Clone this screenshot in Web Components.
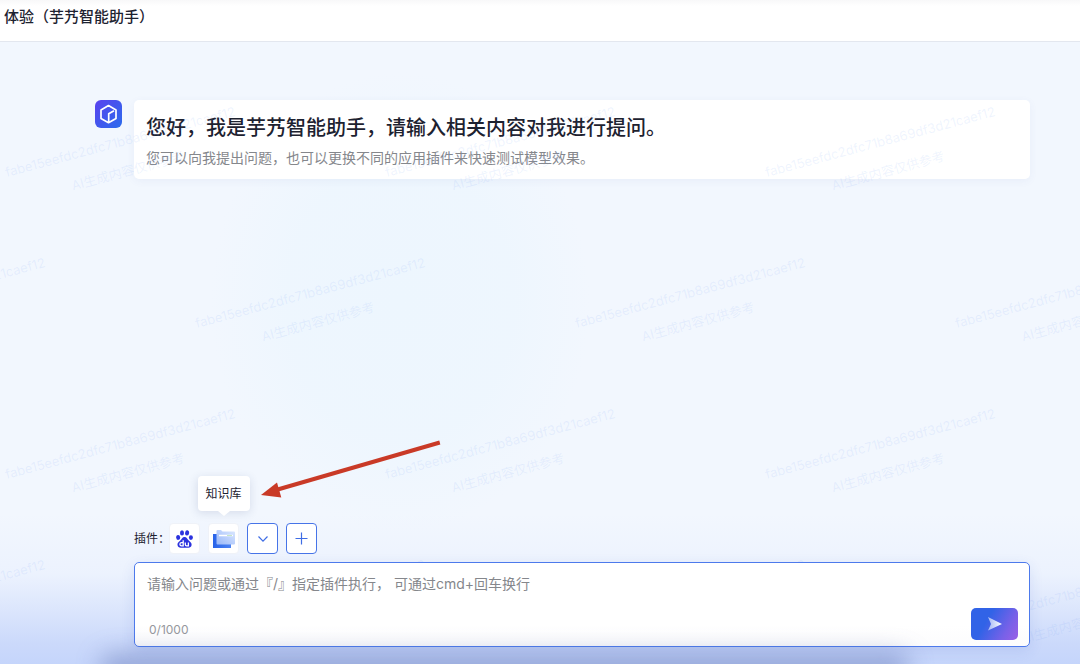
<!DOCTYPE html>
<html lang="zh-CN">
<head>
<meta charset="utf-8">
<title>体验（芋艿智能助手）</title>
<style>
html { height: 100%; }
body { margin: 0; min-height: 100%; display: flex; flex-direction: column; font-family: Inter, "Noto Sans CJK SC", sans-serif; color: #1d2230; }
</style>
</head>
<body>
<page-header>体验（芋艿智能助手）</page-header>
<chat-stage>
  <assistant-message>
    <span slot="title">您好，我是芋艿智能助手，请输入相关内容对我进行提问。</span>
    <span slot="hint">您可以向我提出问题，也可以更换不同的应用插件来快速测试模型效果。</span>
  </assistant-message>
  <plugin-bar slot="footer"></plugin-bar>
  <chat-composer slot="footer"></chat-composer>
</chat-stage>

<script>
class ShadowElement extends HTMLElement {
  constructor() {
    super();
    this.attachShadow({ mode: "open" }).innerHTML = this.render();
  }
}

customElements.define("page-header", class extends ShadowElement {
  render() {
    return `<style>
      :host { display: block; background: linear-gradient(#f8f8f9, #fff 6px); border-bottom: 1px solid #e3e7ef; }
      h1 { margin: 0; padding: 5px 4px 12px; font-size: 15px; line-height: 24px; font-weight: 500; }
    </style><h1><slot></slot></h1>`;
  }
});

customElements.define("chat-stage", class extends ShadowElement {
  render() {
    return `<style>
      :host { position: relative; flex: 1; display: flex; flex-direction: column; justify-content: space-between; overflow: hidden; box-sizing: border-box; padding: 58px 50px 17px 95px;
        background:
          linear-gradient(to top, #c5d5fb 0, #cbd9fb 20px, rgba(216,227,252,.85) 55px, rgba(232,239,254,.6) 90px, rgba(242,247,254,0) 150px),
          radial-gradient(ellipse 190px 230px at 400px 260px, #edf6fe 0, rgba(237,246,254,.8) 60%, rgba(242,247,254,0) 100%),
          #f2f7fe; }
      footer { position: relative; z-index: 2; margin-left: 39px; display: flex; flex-direction: column; gap: 8px; }
      .glow { position: absolute; z-index: 3; left: 100px; right: 170px; bottom: -18px; height: 28px; border-radius: 14px; background: rgba(70,90,160,.4); filter: blur(12px); pointer-events: none; }
    </style>
    <slot></slot>
    <water-mark></water-mark>
    <footer><slot name="footer"></slot></footer>
    <div class="glow"></div>`;
  }
});

customElements.define("water-mark", class extends ShadowElement {
  render() {
    let tiles = "";
    for (let row = 0; row * 151 < innerHeight; row++) {
      const shift = row % 2 ? -66 : 124;
      for (let x = shift; x < innerWidth + 120; x += 380) {
        tiles += `<g transform="translate(${x} ${114 + row * 151}) rotate(-15)"><text y="-10">fabe15eefdc2dfc71b8a69df3d21caef12</text><text y="20">AI生成内容仅供参考</text></g>`;
      }
    }
    return `<style>
      :host { position: absolute; inset: 0; z-index: 1; pointer-events: none; }
      svg { display: block; width: 100%; height: 100%; }
      text { font-size: 13px; font-weight: 400; text-anchor: middle; fill: rgba(120,160,245,.12); }
    </style><svg aria-hidden="true">${tiles}</svg>`;
  }
});

customElements.define("assistant-message", class extends ShadowElement {
  render() {
    return `<style>
      :host { display: flex; align-items: flex-start; gap: 12px; }
      svg { flex: none; width: 27px; height: 28px; }
      article { flex: 1; padding: 12px 12px 11px; border-radius: 5px; background: #fff; box-shadow: 0 2px 8px rgba(60,90,170,.06); }
      h2, p { margin: 0; }
      h2 { font-size: 20px; line-height: 32px; font-weight: 500; }
      p { margin-top: 4px; font-size: 14px; line-height: 20px; color: #85878c; }
    </style>
    <svg viewBox="0 0 27 28" aria-hidden="true">
      <defs><linearGradient id="a" x1="0" y1="0" x2="1" y2="1"><stop stop-color="#5a42ef"/><stop offset="1" stop-color="#2b6cec"/></linearGradient></defs>
      <rect width="27" height="28" rx="6" fill="url(#a)"/>
      <path d="M13.5 5.600 21 9.900v8.500l-7.500 4.300L6 18.400V9.900zM19 10.700l-5.300 3.100v8" fill="none" stroke="#fff" stroke-width="1.700" stroke-linejoin="round"/>
    </svg>
    <article><h2><slot name="title"></slot></h2><p><slot name="hint"></slot></p></article>`;
  }
});

customElements.define("plugin-button", class extends ShadowElement {
  render() {
    return `<style>
      :host { position: relative; display: block; }
      button { display: flex; align-items: center; justify-content: center; width: 31px; height: 31px; padding: 0; border: 1px solid #eff2f8; border-radius: 4px; background: #fff; }
      :host([outlined]) button { border-color: #4674e8; }
    </style><button type="button" aria-label="${this.getAttribute("label")}"><slot></slot></button><slot name="tip"></slot>`;
  }
});

customElements.define("tool-tip", class extends ShadowElement {
  render() {
    return `<style>
      :host { position: absolute; left: 50%; bottom: 43px; transform: translateX(-50%); padding: 8px; border-radius: 4px; background: #fff; box-shadow: 0 2px 10px rgba(40,60,110,.14); font-size: 12px; line-height: 19px; white-space: nowrap; }
      :host::after { content: ""; position: absolute; left: 50%; top: 100%; margin-left: -6px; border: 6px solid transparent; border-top: 5px solid #fff; border-bottom: 0; }
    </style><slot></slot>`;
  }
});

customElements.define("plugin-bar", class extends ShadowElement {
  render() {
    return `<style>
      :host { position: relative; display: flex; align-items: center; gap: 8px; }
      .label { width: 27px; font-size: 12px; line-height: 18px; white-space: nowrap; }
      svg { display: block; }
      .pointer { position: absolute; left: 124px; bottom: 52px; pointer-events: none; }
    </style>
    <span class="label">插件：</span>
    <plugin-button label="百度搜索">
      <svg width="17" height="18" viewBox="0 0 17 18" fill="#2b32de" aria-hidden="true">
        <ellipse cx="2.1" cy="7.4" rx="2" ry="2.5" transform="rotate(-8 2 7)"/><ellipse cx="6" cy="2.9" rx="2" ry="2.7"/><ellipse cx="11.1" cy="2.9" rx="2" ry="2.7" transform="rotate(8 11 3)"/><ellipse cx="14.9" cy="7.6" rx="2" ry="2.4"/>
        <path d="M8.5 7.1c-2.2 0-2.7 2.1-4.4 3.6-1.7 1.4-2.9 2.4-2.6 4.4.3 1.9 1.7 2.7 3.5 2.6h7c1.9.1 3.4-.8 3.6-2.7.3-2-1-2.8-2.6-4.2-1.8-1.6-2.2-3.7-4.5-3.7z"/>
        <path d="M7.2 10.3v5.6H5.6c-1 0-1.7-.6-1.7-1.6s.7-1.6 1.7-1.6h1.6M9.3 12.4v2.2c0 .9.4 1.3 1.3 1.3h1.8v-3.5" fill="none" stroke="#fff" stroke-width="1.3"/>
      </svg>
    </plugin-button>
    <plugin-button label="知识库">
      <svg width="24" height="20" viewBox="0 0 24 20" aria-hidden="true">
        <defs><linearGradient id="b"><stop stop-color="#2863e9"/><stop offset="1" stop-color="#4b83f3"/></linearGradient><linearGradient id="f" x1="0" y1="1" x2="1" y2="0"><stop stop-color="#98b7f8"/><stop offset="1" stop-color="#dbe8ff"/></linearGradient></defs>
        <path d="M1 5h5l2 2h11v12H1z" fill="url(#b)"/>
        <path d="M4.500 2q0-1 1-1H9l1.500 1.500h11.500q1 0 1 1v11q0 1-1 1H5.500q-1 0-1-1z" fill="url(#f)"/>
        <path d="M7 6.500h14" stroke="#fff" stroke-width="1.500"/><path d="M15 6.500h5" stroke="#c6e5c4"/>
      </svg>
      <tool-tip slot="tip" role="tooltip">知识库</tool-tip>
    </plugin-button>
    <plugin-button outlined label="展开">
      <svg width="12" height="8" viewBox="0 0 12 8" fill="none" stroke="#3f6de5" aria-hidden="true"><path d="M1.500 1.500 6 6.200l4.500-4.700" stroke-width="1.200"/></svg>
    </plugin-button>
    <plugin-button outlined label="添加">
      <svg width="13" height="13" viewBox="0 0 13 13" fill="none" stroke="#3f6de5" aria-hidden="true"><path d="M6.500.5v12M.5 6.500h12" stroke-width="1.200"/></svg>
    </plugin-button>
    <svg class="pointer" width="184" height="66" viewBox="0 0 184 66" aria-hidden="true">
      <path d="M181.800 6.500 18 54" stroke="#c93a27" stroke-width="4"/><path d="M3 59 19 46.500 23.300 61.500z" fill="#c93a27"/>
    </svg>`;
  }
});

customElements.define("chat-composer", class extends ShadowElement {
  render() {
    return `<style>
      :host { display: block; box-sizing: border-box; padding: 11px 11px 6px 12px; border: 1px solid #4d7aec; border-radius: 5px; background: linear-gradient(#fff 75%, #fcfcfd); box-shadow: 0 4px 14px rgba(50,85,190,.12); }
      textarea { display: block; box-sizing: border-box; width: 100%; height: 34px; margin: 0; padding: 0; border: 0; outline: 0; resize: none; background: none; font: 14px/20px Inter, "Noto Sans CJK SC", sans-serif; color: #1d2230; }
      textarea::placeholder { color: #85878c; opacity: 1; }
      .row { display: flex; align-items: flex-end; justify-content: space-between; }
      .count { padding: 0 2px; font-size: 12px; line-height: 20px; color: #96989d; }
      button { display: flex; align-items: center; justify-content: center; width: 47px; height: 32px; padding: 0; border: 0; border-radius: 5px; background: linear-gradient(120deg, #3163e7 35%, #7961e8 75%, #9b5fe6); }
    </style>
    <textarea id="question" aria-label="问题" placeholder="请输入问题或通过『/』指定插件执行， 可通过cmd+回车换行"></textarea>
    <div class="row"><span class="count">0/1000</span>
      <button type="button" aria-label="发送"><svg width="16" height="14" viewBox="0 0 16 14" aria-hidden="true"><defs><linearGradient id="s"><stop stop-color="#a5b8f5"/><stop offset="1" stop-color="#fff"/></linearGradient></defs><path d="M1 0 15 7 1 13.500 4 7z" fill="url(#s)"/></svg></button>
    </div>`;
  }
});
</script>
</body>
</html>
